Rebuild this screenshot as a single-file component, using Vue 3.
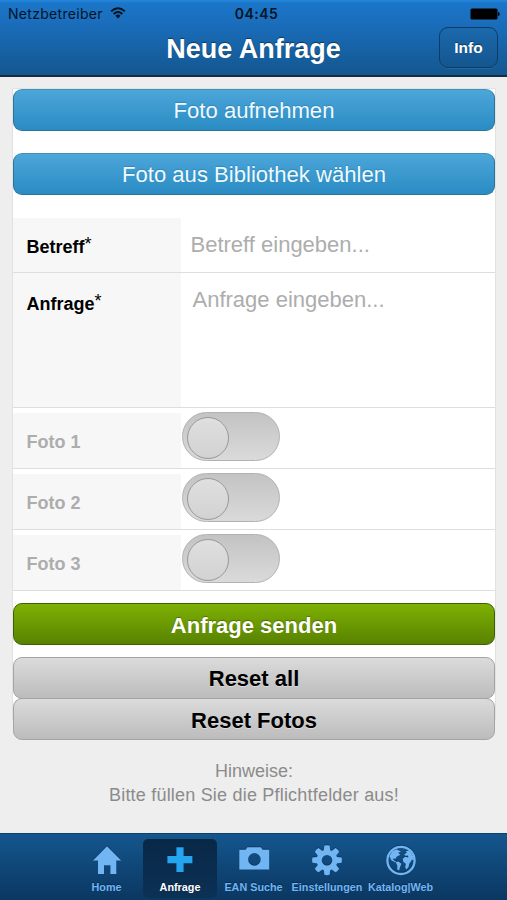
<script setup>
import { ref } from 'vue'

const photos = ref([1, 2, 3])
const tabs = [
  { id: 'home', label: 'Home' },
  { id: 'request', label: 'Anfrage' },
  { id: 'ean', label: 'EAN Suche' },
  { id: 'settings', label: 'Einstellungen' },
  { id: 'catalog', label: 'Katalog|Web' },
]
const active = ref('request')
const teeth = [0, 45, 90, 135, 180, 225, 270, 315]
</script>

<template>
  <div class="screen">
    <header class="top">
      <div class="status">
        <div class="carrier">
          <span class="carrier-name">Netzbetreiber</span>
          <svg class="wifi" width="16" height="12" viewBox="0 0 16 12">
            <path d="M1.1 4.4Q8-1.8 14.9 4.4M3.6 7Q8 3.1 12.4 7" fill="none" stroke="#061424" stroke-width="1.9" />
            <path d="M5.3 8.7Q8 6.5 10.7 8.7L8 11.4Z" fill="#061424" />
          </svg>
        </div>
        <span class="clock">04:45</span>
        <svg class="battery" width="30" height="12" viewBox="0 0 30 12">
          <rect x="0.5" y="0.5" width="27" height="11" rx="1.5" fill="#000" />
          <path d="M28 4q1.7 0 1.7 2t-1.7 2z" fill="#000" />
        </svg>
      </div>
      <div class="titlebar">
        <span></span>
        <h1>Neue Anfrage</h1>
        <button class="info">Info</button>
      </div>
    </header>

    <main>
      <form class="panel" @submit.prevent>
        <button class="btn blue">Foto aufnehmen</button>
        <button class="btn blue second">Foto aus Bibliothek wählen</button>
        <div class="row subject">
          <div class="label">Betreff<span class="star">*</span></div>
          <div class="field">Betreff eingeben...</div>
        </div>
        <div class="row message">
          <div class="label">Anfrage<span class="star">*</span></div>
          <div class="field">Anfrage eingeben...</div>
        </div>
        <div v-for="n in photos" :key="n" class="row photo">
          <div class="label">Foto {{ n }}</div>
          <div class="toggle"><span class="knob"></span></div>
        </div>
        <button class="btn green">Anfrage senden</button>
        <button class="btn grey">Reset all</button>
        <button class="btn grey last">Reset Fotos</button>
      </form>
      <div class="hint">
        <p class="hint-title">Hinweise:</p>
        <p class="hint-text">Bitte füllen Sie die Pflichtfelder aus!</p>
      </div>
    </main>

    <nav>
      <div v-for="tab in tabs" :key="tab.id" class="tab" :class="{ active: tab.id === active }">
        <svg class="icon" width="34" height="34" viewBox="0 0 34 34">
          <path v-if="tab.id === 'home'" d="M17 3.2L31.2 17.5H26.3V31H20.4V22.3H14V31H8V17.5H3Z" />
          <path v-else-if="tab.id === 'request'" d="M13.4 4.2H20.6V12.9H29.4V20.2H20.6V29H13.4V20.2H4.4V12.9H13.4Z" />
          <path
            v-else-if="tab.id === 'ean'"
            fill-rule="evenodd"
            d="M2.3 6.8H8.6L10.4 4.2H23.8L25.6 6.8H32.2V26.4H2.3ZM17.4 10.1A6.3 6.3 0 1 0 17.4 22.7A6.3 6.3 0 1 0 17.4 10.1Z"
          />
          <g v-else-if="tab.id === 'settings'">
            <circle cx="17" cy="17.2" r="7.9" fill="none" stroke="#72b5f3" stroke-width="5.2" />
            <path v-for="a in teeth" :key="a" :transform="`rotate(${a} 17 17.2)`" d="M13.6 9L14.4 2.6Q17 1.9 19.6 2.6L20.4 9Z" />
          </g>
          <g v-else>
            <circle cx="17" cy="17.4" r="13.6" fill="none" stroke="#72b5f3" stroke-width="2.3" />
            <path d="M5.4 13.2L8.2 8.3L12.6 6.2L17 8.4L14.2 9.8L16.4 11.8L12.9 13.4L11.4 15.8L8.8 15.4L9.8 17.2L12 18.6L11 19.2L7.4 17.2Z" />
            <path d="M11.6 19L14.4 18.4L17.5 20.8L16.2 23.4L15 27.6L13.3 26.4L13.3 22.6Z" />
            <path d="M20.2 11.6L22.8 9.6L21.8 8.2L25.4 7.2L29.2 13.4L30 17.4L28 16.4L26.8 18.6L25.2 20.8L24.6 24L22.3 26.4L21.2 24.2L21.8 20.8L19.2 18.8L18.8 15.6L21.2 13.8L24.4 14.4L24 12.6L21.6 12.8Z" />
          </g>
        </svg>
        <span class="tab-label">{{ tab.label }}</span>
      </div>
    </nav>
  </div>
</template>

<style>
body {
  background: #eee;
}
</style>

<style scoped>
.screen {
  width: 507px;
  height: 900px;
  display: flex;
  flex-direction: column;
  overflow: hidden;
  background: #eee;
  font-family: "Liberation Sans", Arial, sans-serif;
}
.top {
  flex: none;
  box-sizing: border-box;
  height: 77px;
  background: linear-gradient(#2389df 0, #1b76c9 3px, #1a6dbb 24px, #13578f 75px);
  border-bottom: 2px solid #152c41;
}
.status {
  box-sizing: border-box;
  height: 27px;
  padding: 0 7px 0 8px;
  display: grid;
  grid-template-columns: 1fr auto 1fr;
  align-items: center;
  color: #061424;
  font-family: Inter, sans-serif;
  font-size: 14px;
  line-height: 27px;
}
.carrier {
  display: flex;
  align-items: center;
  gap: 7px;
}
.carrier-name {
  letter-spacing: 0.3px;
}
.wifi {
  margin-top: -2px;
}
.clock {
  padding-left: 5px;
  font-weight: 600;
  letter-spacing: 0.5px;
}
.battery {
  justify-self: end;
}
.titlebar {
  display: grid;
  grid-template-columns: 1fr auto 1fr;
  padding: 0 9px;
  height: 41px;
  align-items: center;
}
h1 {
  margin: 3px 0 0;
  color: #fff;
  font-size: 27px;
  line-height: 32px;
  font-weight: bold;
  text-shadow: 0 -1px 1px rgba(0, 0, 0, 0.45);
}
button {
  font-family: inherit;
  padding: 0;
  box-sizing: border-box;
}
.info {
  justify-self: end;
  width: 59px;
  height: 41px;
  border: 1.5px solid #0b3c69;
  border-radius: 9px;
  background: linear-gradient(#1b69ac, #14568f);
  color: #fff;
  font-size: 15.5px;
  font-weight: bold;
  text-shadow: 0 -1px 1px rgba(0, 0, 0, 0.4);
  box-shadow: 0 1px 0 rgba(255, 255, 255, 0.08);
}
main {
  flex: 1;
  padding: 11.5px 12px 0 13px;
}
.panel {
  display: flex;
  flex-direction: column;
  height: 630px;
  background: #fff;
  box-shadow: 0 0 0 1px #e2e2e2;
}
.btn {
  flex: none;
  height: 42px;
  border-radius: 9px;
  font-size: 22px;
  line-height: 40px;
}
.blue {
  color: #eefaff;
  border: 1px solid #2d7299;
  border-top-color: #438fb7;
  background: linear-gradient(#4ca6da, #2a8cc3);
  font-size: 22.1px;
  padding-top: 1px;
  text-shadow: 0 -1px 1px rgba(0, 50, 80, 0.2);
}
.second {
  margin-top: 22px;
}
.green {
  margin-top: 12px;
  padding-top: 2px;
  color: #fff;
  font-weight: bold;
  border: 1px solid #3f6105;
  background: linear-gradient(#7eb104, #588200);
  text-shadow: 0 -1px 1px rgba(0, 0, 0, 0.3);
}
.grey {
  margin-top: 12px;
  padding-top: 1px;
  color: #000;
  font-weight: bold;
  border: 1px solid #a4a4a4;
  background: linear-gradient(#dbdbdb, #bcbcbc);
  text-shadow: 0 1px 0 rgba(255, 255, 255, 0.4);
}
.grey.last {
  margin-top: -0.5px;
  padding-top: 2px;
}
.row {
  flex: none;
  box-sizing: border-box;
  display: flex;
  border-bottom: 1.5px solid #dedede;
}
.label {
  box-sizing: border-box;
  width: 168px;
  flex: none;
  padding-left: 13.5px;
  background: #f7f7f7;
  color: #000;
  font-size: 18px;
  font-weight: bold;
  line-height: 22px;
}
.star {
  display: inline-block;
  font-weight: normal;
  line-height: 18px;
  vertical-align: 3px;
}
.field {
  color: #adadad;
  font-size: 22px;
  line-height: 26px;
}
.subject {
  margin-top: 23px;
  height: 55px;
}
.subject .label {
  padding-top: 17px;
}
.subject .field {
  padding: 14px 0 0 9.5px;
}
.message {
  height: 135px;
}
.message .label {
  padding-top: 19px;
}
.message .field {
  padding: 14px 0 0 11.5px;
}
.photo {
  height: 61px;
  padding-top: 5px;
}
.photo .label {
  color: #adadad;
  padding-top: 18.5px;
}
.toggle {
  box-sizing: border-box;
  margin: -0.5px 0 0 1px;
  width: 98px;
  height: 49px;
  padding: 4px;
  border: 1px solid #b2b2b2;
  border-radius: 25px;
  background: linear-gradient(#c3c3c3, #dadada);
}
.knob {
  display: block;
  box-sizing: border-box;
  width: 42px;
  height: 42px;
  margin-top: -0.5px;
  border: 1.3px solid #999;
  border-radius: 50%;
  background: linear-gradient(#dfdfdf, #d2d2d2);
}
.hint {
  padding-top: 40.5px;
  color: #8b8b8b;
  font-size: 18px;
  line-height: 24px;
  text-align: center;
}
.hint p {
  margin: 0;
}
.hint-text {
  letter-spacing: 0.2px;
}
nav {
  flex: none;
  box-sizing: border-box;
  height: 67px;
  display: flex;
  justify-content: center;
  padding-top: 5px;
  border-top: 1px solid #0d406b;
  background: linear-gradient(#14568e, #0b3761);
}
.tab {
  width: 73.5px;
  height: 59px;
  border-radius: 5px;
  display: flex;
  flex-direction: column;
  align-items: center;
  color: #72b5f3;
}
.icon {
  flex: none;
  margin-top: 4px;
  fill: currentColor;
  filter: drop-shadow(0 -1px 0 rgba(0, 20, 45, 0.35));
}
.tab-label {
  margin-top: 3px;
  font-size: 10.8px;
  line-height: 14px;
  font-weight: bold;
  white-space: nowrap;
  text-shadow: 0 -1px 0 rgba(0, 20, 45, 0.5);
}
.tab.active {
  background: linear-gradient(#092847, #0b3155);
  color: #fff;
}
.active .icon {
  fill: #25a4ef;
}
</style>
